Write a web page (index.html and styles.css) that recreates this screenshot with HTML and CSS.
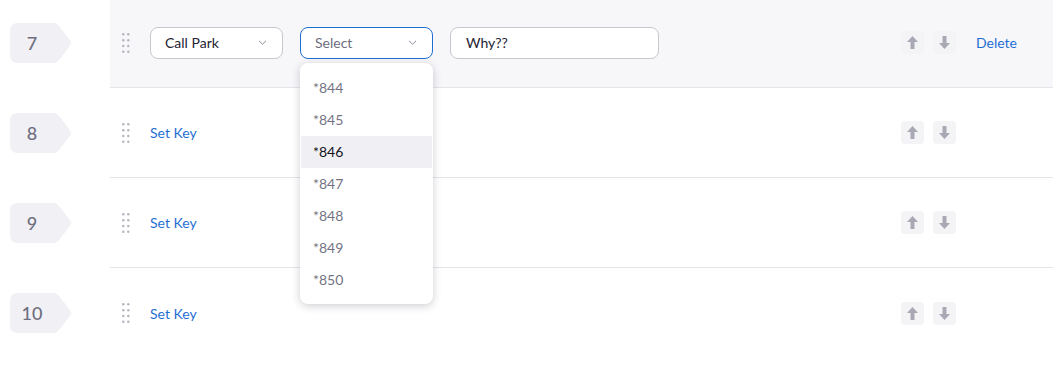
FILE: index.html
```html
<!DOCTYPE html>
<html lang="en">
<head>
    <meta charset="UTF-8">
    <title>Key Settings</title>
    <link rel="stylesheet" href="styles.css">
</head>
<body>
    <div class="key-list">

        <div class="key-row">
            <div class="num">
                <div class="num-badge">
                    <svg class="num-shape" width="62" height="40" viewBox="0 0 62 40"><path d="M8 0 H44 Q47 0 49 3 L60.5 18 Q62 20 60.5 22 L49 37 Q47 40 44 40 H8 Q0 40 0 32 V8 Q0 0 8 0 Z"/></svg>
                    <span class="num-text">7</span>
                </div>
            </div>
            <div class="row-body active">
                <svg class="handle" width="8" height="20" viewBox="0 0 8 20"><circle cx="1.3" cy="1.3" r="1.2"/><circle cx="6.3" cy="1.3" r="1.2"/><circle cx="1.3" cy="7.2" r="1.2"/><circle cx="6.3" cy="7.2" r="1.2"/><circle cx="1.3" cy="13" r="1.2"/><circle cx="6.3" cy="13" r="1.2"/><circle cx="1.3" cy="18.8" r="1.2"/><circle cx="6.3" cy="18.8" r="1.2"/></svg>
                <div class="fields">
                    <div class="select">
                        <span>Call Park</span>
                        <svg class="chevron" width="9" height="5" viewBox="0 0 9 5"><path d="M1 0.8 L4.5 4.2 L8 0.8"/></svg>
                    </div>
                    <div class="select-wrap">
                        <div class="select open">
                            <span class="placeholder">Select</span>
                            <svg class="chevron" width="9" height="5" viewBox="0 0 9 5"><path d="M1 0.8 L4.5 4.2 L8 0.8"/></svg>
                        </div>
                        <ul class="dropdown">
                            <li>*844</li>
                            <li>*845</li>
                            <li class="hover">*846</li>
                            <li>*847</li>
                            <li>*848</li>
                            <li>*849</li>
                            <li>*850</li>
                        </ul>
                    </div>
                    <div class="text-input">Why??</div>
                </div>
                <div class="actions">
                    <span class="move"><svg width="11" height="13" viewBox="0 0 11 13"><path d="M5.5 0 L11 6 H7.5 V13 H3.5 V6 H0 Z"/></svg></span>
                    <span class="move"><svg width="11" height="13" viewBox="0 0 11 13"><path d="M5.5 13 L11 7 H7.5 V0 H3.5 V7 H0 Z"/></svg></span>
                    <a class="delete">Delete</a>
                </div>
            </div>
        </div>

        <div class="key-row">
            <div class="num">
                <div class="num-badge">
                    <svg class="num-shape" width="62" height="40" viewBox="0 0 62 40"><path d="M8 0 H44 Q47 0 49 3 L60.5 18 Q62 20 60.5 22 L49 37 Q47 40 44 40 H8 Q0 40 0 32 V8 Q0 0 8 0 Z"/></svg>
                    <span class="num-text">8</span>
                </div>
            </div>
            <div class="row-body">
                <svg class="handle" width="8" height="20" viewBox="0 0 8 20"><circle cx="1.3" cy="1.3" r="1.2"/><circle cx="6.3" cy="1.3" r="1.2"/><circle cx="1.3" cy="7.2" r="1.2"/><circle cx="6.3" cy="7.2" r="1.2"/><circle cx="1.3" cy="13" r="1.2"/><circle cx="6.3" cy="13" r="1.2"/><circle cx="1.3" cy="18.8" r="1.2"/><circle cx="6.3" cy="18.8" r="1.2"/></svg>
                <div class="fields">
                    <a class="set-key">Set Key</a>
                </div>
                <div class="actions">
                    <span class="move"><svg width="11" height="13" viewBox="0 0 11 13"><path d="M5.5 0 L11 6 H7.5 V13 H3.5 V6 H0 Z"/></svg></span>
                    <span class="move"><svg width="11" height="13" viewBox="0 0 11 13"><path d="M5.5 13 L11 7 H7.5 V0 H3.5 V7 H0 Z"/></svg></span>
                    <a class="delete hidden">Delete</a>
                </div>
            </div>
        </div>

        <div class="key-row">
            <div class="num">
                <div class="num-badge">
                    <svg class="num-shape" width="62" height="40" viewBox="0 0 62 40"><path d="M8 0 H44 Q47 0 49 3 L60.5 18 Q62 20 60.5 22 L49 37 Q47 40 44 40 H8 Q0 40 0 32 V8 Q0 0 8 0 Z"/></svg>
                    <span class="num-text">9</span>
                </div>
            </div>
            <div class="row-body">
                <svg class="handle" width="8" height="20" viewBox="0 0 8 20"><circle cx="1.3" cy="1.3" r="1.2"/><circle cx="6.3" cy="1.3" r="1.2"/><circle cx="1.3" cy="7.2" r="1.2"/><circle cx="6.3" cy="7.2" r="1.2"/><circle cx="1.3" cy="13" r="1.2"/><circle cx="6.3" cy="13" r="1.2"/><circle cx="1.3" cy="18.8" r="1.2"/><circle cx="6.3" cy="18.8" r="1.2"/></svg>
                <div class="fields">
                    <a class="set-key">Set Key</a>
                </div>
                <div class="actions">
                    <span class="move"><svg width="11" height="13" viewBox="0 0 11 13"><path d="M5.5 0 L11 6 H7.5 V13 H3.5 V6 H0 Z"/></svg></span>
                    <span class="move"><svg width="11" height="13" viewBox="0 0 11 13"><path d="M5.5 13 L11 7 H7.5 V0 H3.5 V7 H0 Z"/></svg></span>
                    <a class="delete hidden">Delete</a>
                </div>
            </div>
        </div>

        <div class="key-row">
            <div class="num">
                <div class="num-badge">
                    <svg class="num-shape" width="62" height="40" viewBox="0 0 62 40"><path d="M8 0 H44 Q47 0 49 3 L60.5 18 Q62 20 60.5 22 L49 37 Q47 40 44 40 H8 Q0 40 0 32 V8 Q0 0 8 0 Z"/></svg>
                    <span class="num-text">10</span>
                </div>
            </div>
            <div class="row-body">
                <svg class="handle" width="8" height="20" viewBox="0 0 8 20"><circle cx="1.3" cy="1.3" r="1.2"/><circle cx="6.3" cy="1.3" r="1.2"/><circle cx="1.3" cy="7.2" r="1.2"/><circle cx="6.3" cy="7.2" r="1.2"/><circle cx="1.3" cy="13" r="1.2"/><circle cx="6.3" cy="13" r="1.2"/><circle cx="1.3" cy="18.8" r="1.2"/><circle cx="6.3" cy="18.8" r="1.2"/></svg>
                <div class="fields">
                    <a class="set-key">Set Key</a>
                </div>
                <div class="actions">
                    <span class="move"><svg width="11" height="13" viewBox="0 0 11 13"><path d="M5.5 0 L11 6 H7.5 V13 H3.5 V6 H0 Z"/></svg></span>
                    <span class="move"><svg width="11" height="13" viewBox="0 0 11 13"><path d="M5.5 13 L11 7 H7.5 V0 H3.5 V7 H0 Z"/></svg></span>
                    <a class="delete hidden">Delete</a>
                </div>
            </div>
        </div>

    </div>
</body>
</html>
```

FILE: styles.css
```css
body {
    margin: 0;
    background-color: #ffffff;
    font-family: Lato, 'Noto Sans', sans-serif;
    font-size: 14px;
    color: #232333;
}

.key-list {
    margin-top: -2px;
}

.key-row {
    display: flex;
    height: 90px;
}

.num {
    width: 110px;
    flex-shrink: 0;
    display: flex;
    align-items: center;
    padding-left: 10px;
    box-sizing: border-box;
}

.num-badge {
    display: grid;
    width: 62px;
    height: 40px;
}

.num-shape,
.num-text {
    grid-area: 1 / 1;
}

.num-shape {
    fill: #f0f0f5;
}

.num-text {
    width: 44px;
    align-self: center;
    text-align: center;
    font-size: 18px;
    font-weight: 500;
    color: #6e6e7e;
}

.row-body {
    flex: 1;
    display: flex;
    align-items: center;
    padding: 0 36px 0 12px;
    border-bottom: 1px solid #e4e4ea;
}

.key-row:last-child .row-body {
    border-bottom: none;
}

.row-body.active {
    background-color: #f7f7fa;
}

.handle {
    fill: #b4b4be;
    margin-right: 20px;
}

.fields {
    display: flex;
    align-items: center;
    gap: 17px;
    flex: 1;
}

.select-wrap {
    position: relative;
}

.select {
    width: 133px;
    height: 32px;
    box-sizing: border-box;
    display: flex;
    align-items: center;
    justify-content: space-between;
    padding: 0 15px 0 14px;
    border: 1px solid #c7c7d0;
    border-radius: 8px;
    background-color: #ffffff;
    color: #232333;
}

.select.open {
    border-color: #1f6fd3;
}

.placeholder {
    color: #6e6e7e;
}

.chevron {
    fill: none;
    stroke: #8a8a98;
    stroke-width: 1;
}

.text-input {
    width: 209px;
    height: 32px;
    box-sizing: border-box;
    display: flex;
    align-items: center;
    padding-left: 15px;
    border: 1px solid #c7c7d0;
    border-radius: 8px;
    background-color: #ffffff;
    color: #232333;
}

.dropdown {
    position: absolute;
    top: 36px;
    left: 0;
    width: 133px;
    box-sizing: border-box;
    margin: 0;
    padding: 9px 1px 8px;
    list-style: none;
    background-color: #ffffff;
    border-radius: 8px;
    box-shadow: 0 2px 8px rgba(30, 30, 50, 0.22);
    z-index: 10;
}

.dropdown li {
    height: 32px;
    display: flex;
    align-items: center;
    padding-left: 12px;
    color: #747484;
}

.dropdown li.hover {
    background-color: #f0f0f4;
    color: #131320;
}

.set-key {
    color: #1f6fd3;
    cursor: pointer;
}

.actions {
    display: flex;
    align-items: center;
    gap: 9px;
}

.move {
    width: 23px;
    height: 23px;
    display: flex;
    align-items: center;
    justify-content: center;
    background-color: #f4f4f7;
    border-radius: 4px;
    fill: #a9a9b5;
}

.delete {
    margin-left: 11px;
    color: #1f6fd3;
    cursor: pointer;
}

.delete.hidden {
    visibility: hidden;
}
```
